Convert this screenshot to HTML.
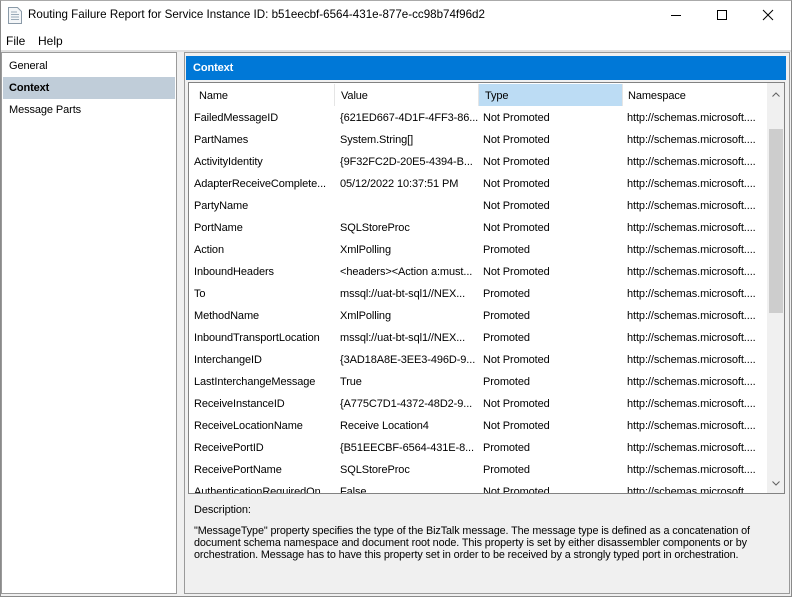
<!DOCTYPE html>
<html><head><meta charset="utf-8"><style>
*{margin:0;padding:0;box-sizing:border-box}
body{width:792px;height:597px;background:#f0f0f0;font-family:"Liberation Sans",sans-serif;font-size:11px;letter-spacing:-0.1px;color:#000;position:relative;overflow:hidden}
.abs{position:absolute}
.t{white-space:nowrap;position:absolute}
</style></head><body>
<div class="abs" style="left:0;top:0;width:792px;height:597px;border:1px solid #8a8a8a;border-top:1px solid #aaa"></div>
<div class="abs" style="left:1px;top:1px;width:790px;height:31px;background:#fff"></div>
<svg class="abs" style="left:8px;top:7px" width="14" height="17"><path d="M0.5 0.5H9.5L13.5 4.5V16.5H0.5Z" fill="#f4f6f8" stroke="#8a9aa8"/><path d="M3 5H9M3 7.5H11M3 10H11M3 12.5H11" stroke="#9aaab8"/></svg>
<div class="t" style="left:28px;top:8px;font-size:11.6px;letter-spacing:0">Routing Failure Report for Service Instance ID: b51eecbf-6564-431e-877e-cc98b74f96d2</div>
<svg class="abs" style="left:660px;top:8px" width="120" height="16"><path d="M11 7.5H21" stroke="#000"/><rect x="57.5" y="2.5" width="9" height="9" fill="none" stroke="#000"/><path d="M103 2L113 12M113 2L103 12" stroke="#000"/></svg>
<div class="abs" style="left:1px;top:32px;width:790px;height:18px;background:#fff"></div>
<div class="t" style="left:6px;top:34px;font-size:12px;letter-spacing:0">File</div>
<div class="t" style="left:38px;top:34px;font-size:12px;letter-spacing:0">Help</div>
<div class="abs" style="left:1px;top:50px;width:790px;height:2px;background:#e0e0e0"></div>
<div class="abs" style="left:1px;top:52px;width:176px;height:542px;background:#fff;border:1px solid #9a9a9a"></div>
<div class="abs" style="left:3px;top:77px;width:172px;height:22px;background:#c0cdd9"></div>
<div class="t" style="left:9px;top:60px">General</div>
<div class="t" style="left:9px;top:82px;font-weight:bold">Context</div>
<div class="t" style="left:9px;top:104px">Message Parts</div>
<div class="abs" style="left:184px;top:52px;width:606px;height:542px;border:1px solid #9a9a9a"></div>
<div class="abs" style="left:186px;top:56px;width:600px;height:24px;background:#0078d7"></div>
<div class="t" style="left:193px;top:62px;color:#fff;font-weight:bold">Context</div>
<div class="abs" style="left:188px;top:82px;width:597px;height:412px;background:#fff;border:1px solid #828282;overflow:hidden">
<div class="abs" style="left:289px;top:1px;width:144px;height:22px;background:#bcdcf4"></div>
<div class="abs" style="left:145px;top:1px;width:1px;height:22px;background:#e5e5e5"></div>
<div class="abs" style="left:289px;top:1px;width:1px;height:22px;background:#e5e5e5"></div>
<div class="abs" style="left:433px;top:1px;width:1px;height:22px;background:#e5e5e5"></div>
<div class="t" style="left:10px;top:7px">Name</div>
<div class="t" style="left:152px;top:7px">Value</div>
<div class="t" style="left:296px;top:7px">Type</div>
<div class="t" style="left:439px;top:7px">Namespace</div>
<div class="abs" id="rows" style="left:0;top:24px;width:580px"></div>
<div class="abs" style="left:578px;top:0;width:17px;height:410px;background:#f0f0f0"></div>
<div class="abs" style="left:580px;top:46px;width:14px;height:184px;background:#cdcdcd"></div>
<svg class="abs" style="left:580px;top:4px" width="14" height="402"><path d="M3.5 9.5L7 6L10.5 9.5" fill="none" stroke="#606060"/><path d="M3.5 394.5L7 398L10.5 394.5" fill="none" stroke="#606060"/></svg>
</div>
<div class="t" style="left:194px;top:504px">Description:</div>
<div class="abs" style="left:194px;top:525px;width:575px;line-height:12px;font-size:10.8px;letter-spacing:-0.1px">"MessageType" property specifies the type of the BizTalk message. The message type is defined as a concatenation of document schema namespace and document root node. This property is set by either disassembler components or by orchestration. Message has to have this property set in order to be received by a strongly typed port in orchestration.</div>
<script>
var d=[["FailedMessageID","{621ED667-4D1F-4FF3-86...","Not Promoted"],["PartNames","System.String[]","Not Promoted"],["ActivityIdentity","{9F32FC2D-20E5-4394-B...","Not Promoted"],["AdapterReceiveComplete...","05/12/2022 10:37:51 PM","Not Promoted"],["PartyName","","Not Promoted"],["PortName","SQLStoreProc","Not Promoted"],["Action","XmlPolling","Promoted"],["InboundHeaders","&lt;headers&gt;&lt;Action a:must...","Not Promoted"],["To","mssql://uat-bt-sql1//NEX...","Promoted"],["MethodName","XmlPolling","Promoted"],["InboundTransportLocation","mssql://uat-bt-sql1//NEX...","Promoted"],["InterchangeID","{3AD18A8E-3EE3-496D-9...","Not Promoted"],["LastInterchangeMessage","True","Promoted"],["ReceiveInstanceID","{A775C7D1-4372-48D2-9...","Not Promoted"],["ReceiveLocationName","Receive Location4","Not Promoted"],["ReceivePortID","{B51EECBF-6564-431E-8...","Promoted"],["ReceivePortName","SQLStoreProc","Promoted"],["AuthenticationRequiredOn...","False","Not Promoted"]];
var h="";d.forEach(function(r,i){var y=i*22+5;h+='<div class="t" style="left:5px;top:'+y+'px">'+r[0]+'</div><div class="t" style="left:151px;top:'+y+'px">'+r[1]+'</div><div class="t" style="left:294px;top:'+y+'px">'+r[2]+'</div><div class="t" style="left:438px;top:'+y+'px">http://schemas.microsoft....</div>';});
document.getElementById("rows").innerHTML=h;
</script>
</body></html>
